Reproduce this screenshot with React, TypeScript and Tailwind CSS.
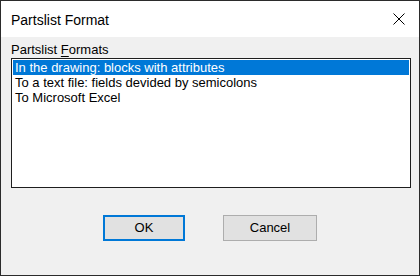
import { useState } from 'react'

const formats = [
  'In the drawing: blocks with attributes',
  'To a text file: fields devided by semicolons',
  'To Microsoft Excel',
]

function CloseIcon() {
  return (
    <svg width="12" height="12" viewBox="0 0 12 12" className="block">
      <path d="M0.5 0.5 L11.5 11.5 M11.5 0.5 L0.5 11.5" stroke="#000" strokeWidth="1" fill="none" />
    </svg>
  )
}

export default function App() {
  const [selected, setSelected] = useState(0)

  return (
    <div
      className="w-[420px] h-[276px] border border-[#2b2b2b] bg-[#f0f0f0] flex flex-col text-black"
      style={{ fontFamily: '"Liberation Sans", Arial, sans-serif' }}
    >
      {/* title bar */}
      <div className="h-[36px] bg-white flex items-center justify-between pl-[10px] pr-[14px]">
        <span className="text-[14px] leading-[16px] pt-[1px]">Partslist Format</span>
        <CloseIcon />
      </div>

      <div className="flex flex-col px-[10px]">
        <label className="mt-[5px] text-[13px] leading-[15px]">
          Partslist <span className="underline underline-offset-[2px]">F</span>ormats
        </label>
        <div className="mt-[1px] w-[400px] h-[130px] border border-[#1e1e1e] bg-white p-[1px]">
          {formats.map((f, i) => (
            <div
              key={f}
              onClick={() => setSelected(i)}
              className={
                'h-[15px] px-[2px] text-[13px] leading-[15px] whitespace-nowrap ' +
                (i === selected ? 'bg-[#0078d7] text-white' : 'text-black')
              }
            >
              {f}
            </div>
          ))}
        </div>
      </div>

      <div className="flex justify-center gap-[38px] mt-[27px] text-[13px]">
        <button className="w-[82px] h-[26px] bg-[#e1e1e1] border-2 border-[#0078d7]">OK</button>
        <button className="w-[94px] h-[26px] bg-[#e1e1e1] border border-[#adadad]">Cancel</button>
      </div>
    </div>
  )
}
